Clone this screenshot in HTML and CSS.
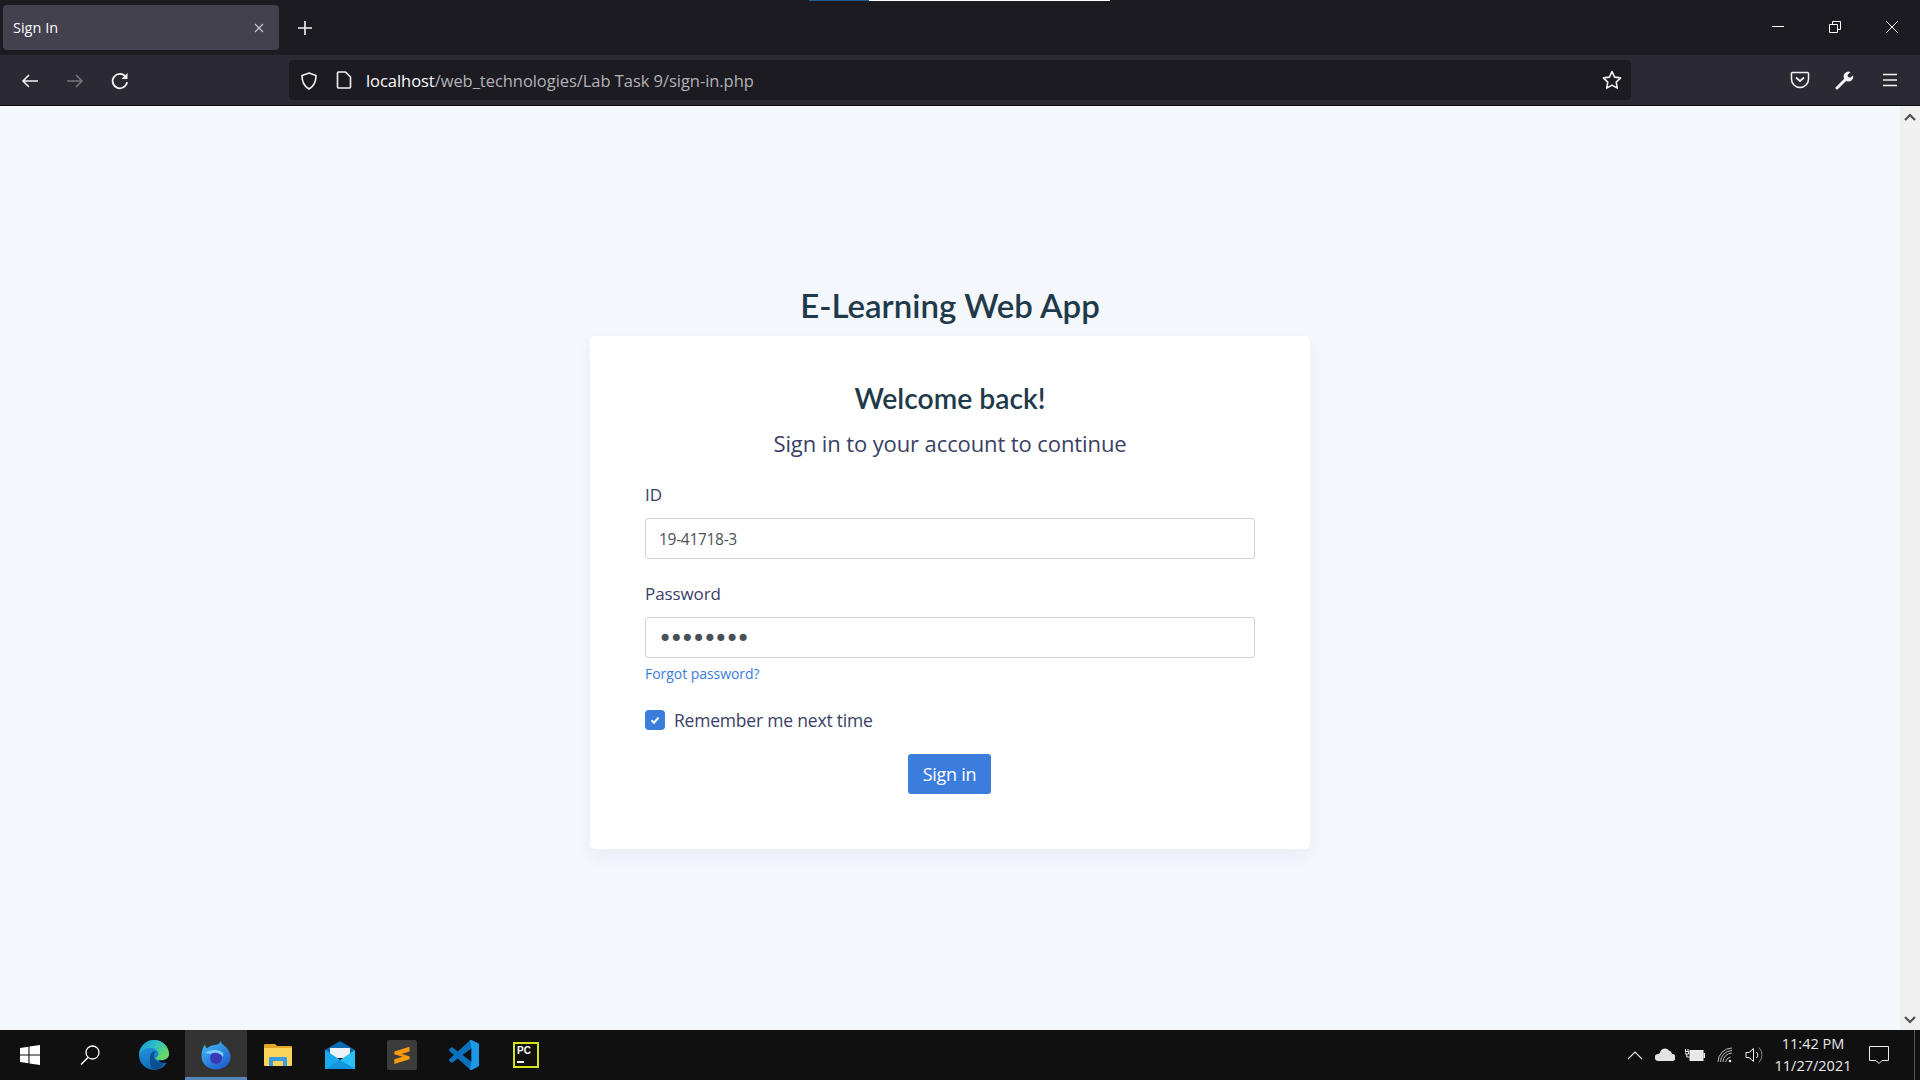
FILE: index.html
```html
<!DOCTYPE html>
<html lang="en">
<head>
<meta charset="utf-8">
<title>Sign In</title>
<link rel="stylesheet" href="styles.css">
</head>
<body>
<div class="screen">
  <header class="tabbar">
    <div class="loadline"><span class="load-blue"></span><span class="load-white"></span></div>
    <div class="tab">
      <span class="tab-title">Sign In</span>
      <svg class="tab-close" width="10" height="10" viewBox="0 0 10 10"><path d="M1 1l8 8M9 1l-8 8" stroke="#c9c9cf" stroke-width="1.1" fill="none"/></svg>
    </div>
    <svg class="newtab" width="16" height="16" viewBox="0 0 16 16"><path d="M8 1v14M1 8h14" stroke="#f4f4f6" stroke-width="1.6" fill="none"/></svg>
    <div class="winctrl">
      <svg width="14" height="14" viewBox="0 0 14 14"><path d="M1 6.500h12" stroke="#fff" fill="none"/></svg>
      <svg width="14" height="14" viewBox="0 0 14 14"><path d="M1.500 4.500h8v8h-8zM4.500 4.500v-3h8v8h-3" stroke="#fff" fill="none"/></svg>
      <svg width="14" height="14" viewBox="0 0 14 14"><path d="M1 1l12 12M13 1l-12 12" stroke="#fff" fill="none"/></svg>
    </div>
  </header>
  <nav class="toolbar">
    <div class="navbtns">
      <svg width="20" height="20" viewBox="0 0 20 20"><path d="M18 10H3M9 4l-6 6 6 6" stroke="#f4f4f6" stroke-width="1.600" fill="none"/></svg>
      <svg width="20" height="20" viewBox="0 0 20 20"><path d="M2 10h15M11 4l6 6-6 6" stroke="#76767c" stroke-width="1.600" fill="none"/></svg>
      <svg width="20" height="20" viewBox="0 0 20 20"><path d="M15.800 6A7.200 7.200 0 1 0 17 11" stroke="#f4f4f6" stroke-width="1.800" fill="none"/><path d="M17.500 2v6h-6z" fill="#f4f4f6"/></svg>
    </div>
    <div class="urlbar">
      <svg class="shield" width="20" height="20" viewBox="0 0 20 20"><path d="M10 2l7 2.500c0 6-1.500 10.500-7 13.500-5.500-3-7-7.500-7-13.500z" stroke="#f4f4f6" stroke-width="1.600" fill="none"/></svg>
      <svg class="pageicon" width="16" height="18" viewBox="0 0 16 18"><path d="M2.500 1h7l5 5v10a1 1 0 0 1-1 1h-11a1 1 0 0 1-1-1V2a1 1 0 0 1 1-1z" stroke="#f4f4f6" stroke-width="1.600" fill="none"/></svg>
      <span class="url"><span class="host">localhost</span>/web_technologies/Lab Task 9/sign-in.php</span>
      <svg class="star" width="22" height="22" viewBox="0 0 22 22"><path d="M11 2.500l2.600 5.600 6 .8-4.400 4.200 1.100 6-5.300-3-5.300 3 1.100-6-4.400-4.200 6-.8z" stroke="#f4f4f6" stroke-width="1.600" stroke-linejoin="round" fill="none"/></svg>
    </div>
    <div class="tools">
      <svg width="20" height="20" viewBox="0 0 20 20"><path d="M2.500 2.500h15a1 1 0 0 1 1 1V9a8.500 8.500 0 0 1-17 0V3.500a1 1 0 0 1 1-1z" stroke="#f4f4f6" stroke-width="1.500" fill="none"/><path d="M6 7.500l4 3.500 4-3.500" stroke="#f4f4f6" stroke-width="1.700" fill="none"/></svg>
      <svg width="20" height="20" viewBox="0 0 20 20"><path d="M2 18l8-8" stroke="#f4f4f6" stroke-width="3" stroke-linecap="round" fill="none"/><path d="M9 8.500a5 5 0 0 1 6.500-6.500l-3 3 .7 2 2 .7 3-2.500a5 5 0 0 1-6.500 6z" fill="#f4f4f6"/></svg>
      <svg width="20" height="20" viewBox="0 0 20 20"><path d="M3 4.500h14M3 10h14M3 15.500h14" stroke="#f4f4f6" stroke-width="1.600" fill="none"/></svg>
    </div>
  </nav>
  <div class="viewport">
    <main class="page">
      <h1 class="app-title">E-Learning Web App</h1>
      <section class="card">
        <h2 class="welcome">Welcome back!</h2>
        <p class="subtitle">Sign in to your account to continue</p>
        <form class="form">
          <label class="label" for="uid">ID</label>
          <input class="input id-input" id="uid" type="text" value="19-41718-3">
          <label class="label pw-label" for="pw">Password</label>
          <input class="input pw-input" id="pw" type="password" value="12345678">
          <a class="forgot" href="#">Forgot password?</a>
          <div class="remember">
            <span class="check"><svg width="12" height="12" viewBox="0 0 12 12"><path d="M2.500 6.200l2.500 2.500 4.500-5" stroke="#fff" stroke-width="2" fill="none"/></svg></span>
            <span>Remember me next time</span>
          </div>
          <button class="submit" type="button">Sign in</button>
        </form>
      </section>
    </main>
    <aside class="scrollbar">
      <svg width="14" height="10" viewBox="0 0 14 10"><path d="M2 8l5-5 5 5" stroke="#505050" stroke-width="2.200" fill="none"/></svg>
      <svg width="14" height="10" viewBox="0 0 14 10"><path d="M2 2l5 5 5-5" stroke="#505050" stroke-width="2.200" fill="none"/></svg>
    </aside>
  </div>
  <footer class="taskbar">
    <div class="task-start"><svg width="20" height="20" viewBox="0 0 20 20"><path d="M0 3l8.400-1.200v7.700H0zM9.500 1.600L20 0v9.500H9.500zM0 10.500h8.400v7.700L0 17zM9.500 10.500H20V20L9.500 18.400z" fill="#fff"/></svg></div>
    <div class="task-search"><svg width="20" height="20" viewBox="0 0 20 20"><circle cx="12.500" cy="7.500" r="6.500" stroke="#fff" stroke-width="1.300" fill="none"/><path d="M8 12.500L1 19.500" stroke="#fff" stroke-width="1.400" fill="none"/></svg></div>
    <div class="task-icon"><svg width="30" height="30" viewBox="0 0 30 30"><defs><linearGradient id="edgeg" x1="0" y1="0" x2="1" y2=".6"><stop offset="0" stop-color="#1a8fd0"/><stop offset=".5" stop-color="#2cc0c8"/><stop offset="1" stop-color="#6ad85c"/></linearGradient><linearGradient id="edgeb" x1="0" y1="0" x2=".3" y2="1"><stop offset="0" stop-color="#2aa0e4"/><stop offset="1" stop-color="#0f6cbd"/></linearGradient></defs><circle cx="15" cy="15" r="15" fill="url(#edgeb)"/><path d="M1 10C4 3 10 0 15 0c9 0 15 7 15 14 0 4-4 6-8 6-4 0-6-1-6-2 3-1 4-3 3-6-2-4-7-5-11-4-3 1-6 3-8 6z" fill="url(#edgeg)" stroke="none"/><path d="M30 15c0 3-4 5.500-8 5.500-2 0-3 .5-1 1.500 2 1 5 1.500 7 .5V30h2z" fill="#101010"/><path d="M26 22c-3 5-7 8-11 8-3 0-4-6-4-12 0-5 3-7 6-7-2 2-3 5-1 8 2 3 6 5 10 3z" fill="#0c4f8e"/></svg></div>
    <div class="task-icon task-active"><svg width="30" height="30" viewBox="0 0 30 30"><defs><linearGradient id="foxg" x1="0" y1="0" x2=".7" y2="1"><stop offset="0" stop-color="#45c0f5"/><stop offset="1" stop-color="#1f5fd0"/></linearGradient></defs><path d="M20 1c0 3 3 4 5 6 3 3 4.500 7 4.500 10 0 7-6.500 12.500-14.500 12.500S.5 24 .5 16C.5 11 2 7 4 4.500c.5 2 1 3 2 4 2-2 5-3.500 8-3.500 2 0 4-1 6-4z" fill="url(#foxg)"/><circle cx="15" cy="18" r="6" fill="#3a3ab8"/><path d="M4 13c4-3 10-4 15-2 3 1 4 3 3 6-2-3-6-5-10-4-2 1-5 1-8 0z" fill="#7fd0f8"/></svg></div>
    <div class="task-icon"><svg width="28" height="24" viewBox="0 0 28 24"><path d="M0 2a1 1 0 0 1 1-1h10l2 2h14a1 1 0 0 1 1 1v3H0z" fill="#e1a528"/><path d="M0 5h28v17a1 1 0 0 1-1 1H1a1 1 0 0 1-1-1z" fill="#fbd45c"/><path d="M5 23v-8a1 1 0 0 1 1-1h16a1 1 0 0 1 1 1v8h-4v-5H9v5z" fill="#3b9be0"/></svg></div>
    <div class="task-icon"><svg width="30" height="28" viewBox="0 0 30 28"><path d="M15 0L30 9v3H0V9z" fill="#0a6bb5"/><path d="M5 7h20v10H5z" fill="#eef3f7"/><path d="M0 9l15 10L30 9v19H0z" fill="#28c0f5"/><path d="M0 9l15 10-15 9z" fill="#1aa8ee"/><path d="M0 28l15-9 15 9z" fill="#1594e2"/></svg></div>
    <div class="task-icon"><svg width="30" height="30" viewBox="0 0 30 30"><rect width="30" height="30" rx="2" fill="#3c3c3c"/><path d="M22.500 6.700v4.700l-8 2.600 8 2.200v3.100L7.300 24v-4.700l8.200-2.500-8.200-2.600v-2.700z" fill="#f99a0c"/></svg></div>
    <div class="task-icon"><svg width="30" height="30" viewBox="0 0 100 100"><path d="M96.500 10.800L75.900.9a6.200 6.200 0 0 0-7.100 1.200L29.400 38.100 12.200 25.100a4.200 4.200 0 0 0-5.300.2L1.400 30.300a4.200 4.200 0 0 0 0 6.200L16.300 50 1.400 63.500a4.200 4.200 0 0 0 0 6.200l5.500 5a4.200 4.200 0 0 0 5.300.2l17.200-13 39.400 36a6.200 6.200 0 0 0 7.100 1.200l20.600-9.900a6.200 6.200 0 0 0 3.500-5.600V16.400a6.200 6.200 0 0 0-3.500-5.600zM75 72.700L45.100 50 75 27.300z" fill="#0a72bd"/><path d="M70 .5l5.900.4 20.600 9.900a6.200 6.200 0 0 1 3.500 5.600v67.200a6.200 6.200 0 0 1-3.500 5.600L75.900 99.100a6 6 0 0 1-5.900-.4l5-26V27.300z" fill="#1c9ae6"/></svg></div>
    <div class="task-icon"><span class="pc-logo"><span class="pc-text">PC</span><span class="pc-dash"></span></span></div>
    <div class="tray">
      <svg width="16" height="10" viewBox="0 0 16 10"><path d="M1 9l7-7 7 7" stroke="#e8e8e8" stroke-width="1.100" fill="none"/></svg>
      <svg width="20" height="14" viewBox="0 0 20 14"><path d="M5 5a5 5 0 0 1 9-2.500 4 4 0 0 1 3 3.500 3.500 3.500 0 0 1 0 7H3.500a3.500 3.500 0 0 1-.5-7c1 0 1.500-1 2-1z" fill="#e3e3e3"/></svg>
      <svg class="battery" width="20" height="12" viewBox="0 0 20 12"><path d="M.5 0v2M3 0v2M0 2.500h3.500v2.500H0zM1.800 5v3h3" stroke="#eee" fill="none"/><rect x="5" y="1.500" width="13" height="10" stroke="#eee" fill="#e8e8e8"/><rect x="18.500" y="4" width="1.500" height="5" fill="#eee"/></svg>
      <svg width="16" height="16" viewBox="0 0 16 16"><path d="M1 15a14 14 0 0 1 14-14M3.500 15a11.500 11.500 0 0 1 11.500-11.500M6 15a9 9 0 0 1 9-9M8.500 15a6.500 6.500 0 0 1 5-5" stroke="#bdbdbd" fill="none"/><circle cx="13" cy="14" r="1.300" fill="#eee"/></svg>
      <svg width="20" height="18" viewBox="0 0 20 18"><path d="M1 6.500h3L8.500 2.500v13L4 11.500H1z" stroke="#eee" fill="none"/><path d="M11.500 6a4 4 0 0 1 0 6" stroke="#eee" fill="none"/><path d="M14 1.500a11 11 0 0 1 0 15" stroke="#888" fill="none"/></svg>
      <div class="clock"><span>11:42 PM</span><span>11/27/2021</span></div>
      <div class="notif"><svg width="20" height="18" viewBox="0 0 20 18"><path d="M.5.500h19v14H13l-3 3-3-3H.5z" stroke="#eee" fill="none"/></svg></div>
      <div class="showdesk"></div>
    </div>
  </footer>
</div>
</body>
</html>
```
FILE: styles.css
```css
* { box-sizing: border-box; }
html, body { margin: 0; height: 100%; overflow: hidden; }
body { font-family: "Open Sans", "Liberation Sans", sans-serif; }
svg { display: block; flex: none; }

.screen { width: 1920px; height: 1080px; display: flex; flex-direction: column; background: #f4f7fc; }

/* title bar */
.tabbar { position: relative; height: 55px; flex: none; display: flex; align-items: flex-start; background: #1c1b22; padding: 5px 0 0 3px; }
.loadline { position: absolute; top: 0; left: 809px; display: flex; height: 1px; }
.load-blue { width: 60px; background: #1a5f92; }
.load-white { width: 241px; background: #fff; }
.tab { width: 276px; height: 45px; background: #42414d; border-radius: 4px; display: flex; align-items: center; justify-content: space-between; padding: 0 15px 0 10px; }
.tab-title { color: #fbfbfe; font-size: 14.500px; letter-spacing: 0; }
.newtab { margin: 15px 0 0 18px; }
.winctrl { margin-left: auto; display: flex; gap: 43px; padding: 15px 21px 0 0; }

/* toolbar */
.toolbar { height: 51px; flex: none; display: flex; align-items: center; background: #2b2a33; border-bottom: 1px solid #0c0c0d; padding: 0 20px; }
.navbtns { display: flex; gap: 25px; width: 269px; margin-top: 2px; }
.urlbar { width: 1342px; height: 40px; background: #1c1b22; border-radius: 4px; display: flex; align-items: center; padding: 0 8px 0 10px; }
.shield { margin-top: 2px; }
.pageicon { margin: 0 0 0 17px; }
.url { margin: 1px 0 0 14px; font-size: 16.500px; color: #b2b2b6; letter-spacing: -0.05px; white-space: nowrap; }
.host { color: #fbfbfe; }
.star { margin-left: auto; }
.tools { margin-left: auto; display: flex; gap: 25px; }

/* page */
.viewport { flex: 1; min-height: 0; display: flex; }
.page { flex: 1; display: flex; flex-direction: column; align-items: center; padding-top: 174px; }
.app-title { margin: 0 0 6px; height: 50px; line-height: 50px; font-family: "Lato", sans-serif; font-weight: 600; font-size: 33px; color: #1f3a4a; }
.card { width: 720px; height: 513px; background: #fff; border-radius: 5px; box-shadow: 0 8px 16px rgba(180,195,220,.16); padding: 44px 55px 0; display: flex; flex-direction: column; }
.welcome { margin: 0; height: 36px; line-height: 36px; text-align: center; font-family: "Lato", sans-serif; font-weight: 600; font-size: 28.300px; color: #1f3a4a; }
.subtitle { margin: 9px 0 0; height: 36px; line-height: 36px; text-align: center; font-size: 22px; color: #3a4066; letter-spacing: -0.1px; }
.form { display: flex; flex-direction: column; margin-top: 21px; }
.label { height: 26px; line-height: 26px; font-size: 17px; color: #3a4066; letter-spacing: -0.1px; }
.pw-label { margin-top: 22px; }
.input { width: 610px; height: 41px; margin-top: 10px; border: 1px solid #ced4da; border-radius: 3px; background: #fff; padding: 1px 13px 0; font-family: "Open Sans", sans-serif; font-size: 15.500px; color: #495057; outline: none; letter-spacing: -0.3px; }
.pw-input { font-family: "DejaVu Sans", sans-serif; font-size: 24px; letter-spacing: -3px; padding: 2px 12px 0; }
.forgot { margin-top: 6px; height: 20px; line-height: 20px; font-size: 14px; color: #3b7ddd; text-decoration: none; letter-spacing: -0.05px; }
.remember { display: flex; align-items: center; gap: 9px; margin-top: 23px; height: 26px; font-size: 17.500px; color: #3a4066; letter-spacing: -0.2px; }
.check { width: 20px; height: 20px; border-radius: 4px; background: #3b7ddd; display: flex; align-items: center; justify-content: center; }
.submit { align-self: center; width: 83px; height: 40px; margin: 21px 1px 0 0; border: 0; border-radius: 3px; background: #3b7ddd; color: #fff; font-family: "Open Sans", sans-serif; font-size: 18px; letter-spacing: -0.3px; padding: 0; }

/* scrollbar */
.scrollbar { width: 20px; flex: none; background: #f0f0f0; display: flex; flex-direction: column; justify-content: space-between; align-items: center; padding: 6px 0 5px; }

/* taskbar */
.taskbar { height: 50px; flex: none; display: flex; align-items: center; background: #101010; }
.task-start { width: 60px; height: 50px; display: flex; align-items: center; justify-content: center; }
.task-search { width: 60px; height: 50px; margin-right: 3px; display: flex; align-items: center; justify-content: center; }
.task-icon { width: 62px; height: 50px; display: flex; align-items: center; justify-content: center; }
.task-active { background: #333; box-shadow: inset 0 -3px 0 #5487b5; }
.pc-logo { width: 26px; height: 26px; background: #111; border: 2px solid #d5e31c; display: flex; flex-direction: column; padding: 2px 2px; }
.pc-text { color: #fff; font: 700 10px/10px "Liberation Sans", sans-serif; }
.pc-dash { width: 7px; height: 1.500px; margin-top: 5px; background: #fff; }
.tray { margin-left: auto; display: flex; align-items: center; height: 50px; }
.tray > svg { margin-left: 12px; }
.tray > .battery { margin-left: 10px; }
.clock { display: flex; flex-direction: column; align-items: center; margin-left: 10px; width: 76px; color: #e8e8e8; font-size: 14.500px; line-height: 22px; white-space: nowrap; }
.notif { width: 50px; height: 50px; display: flex; align-items: center; justify-content: center; margin-left: 3px; }
.showdesk { width: 6px; height: 50px; border-left: 1px solid #555; margin-left: 10px; }
```
